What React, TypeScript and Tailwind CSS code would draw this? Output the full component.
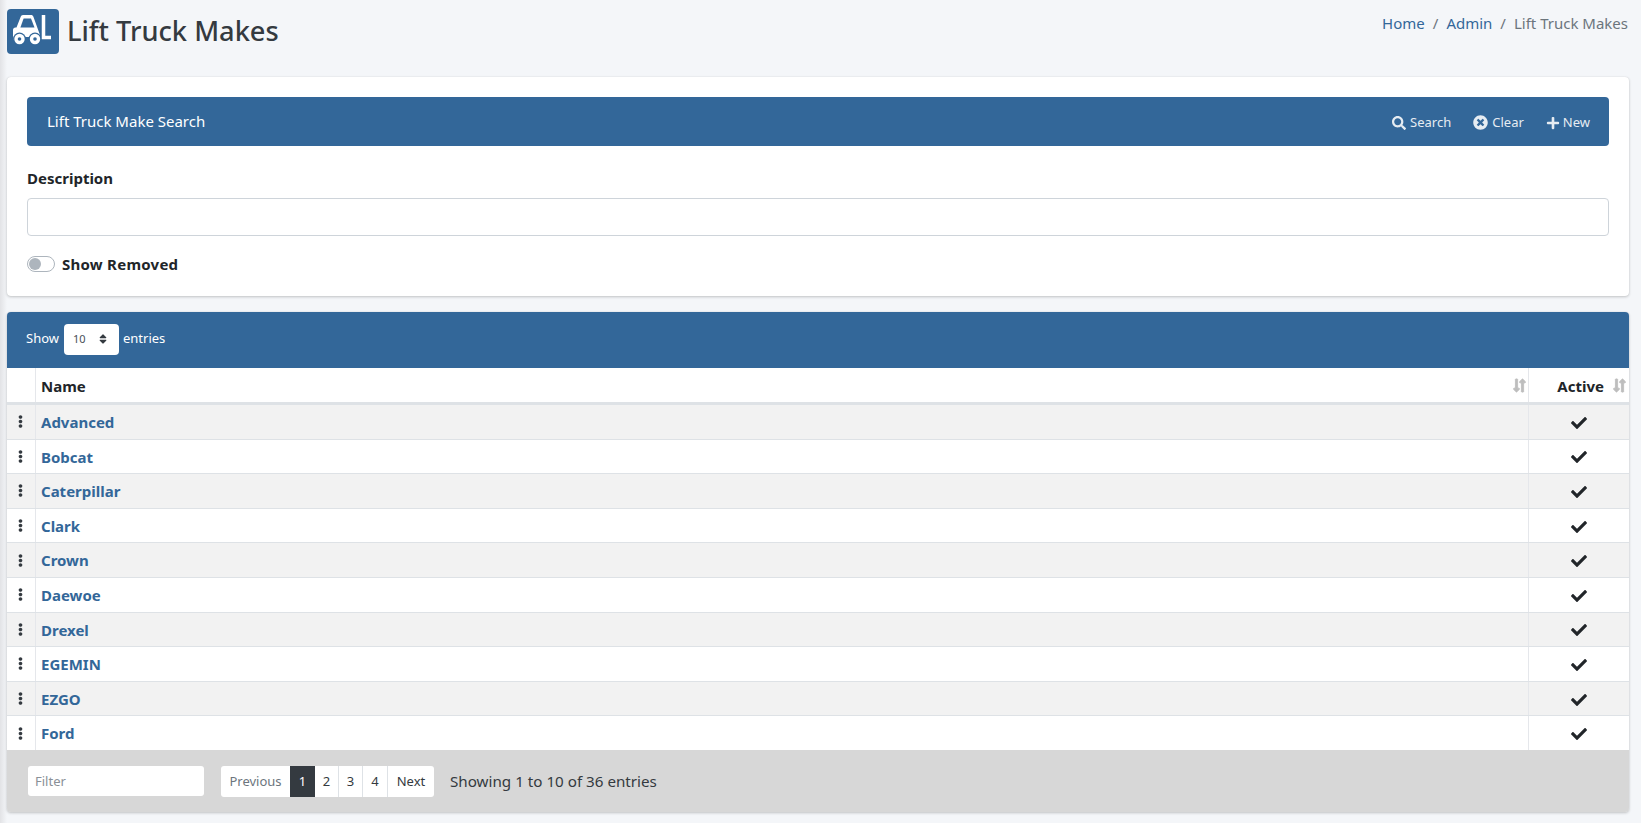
import { FaSearch, FaTimesCircle, FaPlus, FaCheck, FaEllipsisV, FaSort, FaLongArrowAltDown, FaLongArrowAltUp } from 'react-icons/fa'

const MAKES = ['Advanced', 'Bobcat', 'Caterpillar', 'Clark', 'Crown', 'Daewoe', 'Drexel', 'EGEMIN', 'EZGO', 'Ford']

function SortIcon() {
  return (
    <span className="flex text-[#bdbdbd]">
      <FaLongArrowAltDown className="w-[7px] h-[15px] stroke-[30px]" preserveAspectRatio="none" />
      <FaLongArrowAltUp className="w-[7px] h-[15px] -ml-[1px] stroke-[30px]" preserveAspectRatio="none" />
    </span>
  )
}

function ForkliftLogo() {
  return (
    <svg width="52" height="45" viewBox="0 0 52 45" className="shrink-0">
      <rect width="52" height="45" rx="4" fill="#336799" />
      <path d="M16 6h8c1.200 0 2 .6 2.400 1.700L33 26v5h-4l-3-3H16l-3 3H6V21c0-1.400 1-2.400 2.400-2.400h1.100L13.600 8c.4-1.200 1.200-2 2.400-2z" fill="#fff" />
      <path d="M16.600 9.500 13.400 18.600H27.500L24 9.500z" fill="#336799" />
      <circle cx="12.500" cy="30" r="6.500" fill="#336799" />
      <circle cx="12.500" cy="30" r="5.200" fill="#fff" />
      <circle cx="12.500" cy="30" r="1.800" fill="#336799" />
      <circle cx="28" cy="30" r="6.500" fill="#336799" />
      <circle cx="28" cy="30" r="5.200" fill="#fff" />
      <circle cx="28" cy="30" r="1.800" fill="#336799" />
      <path d="M36.500 6v22.500h7.500" stroke="#fff" strokeWidth="3.500" fill="none" />
    </svg>
  )
}

export default function App() {
  return (
    <div className="relative w-[1641px] h-[823px] overflow-hidden bg-[#f4f6f9] pl-[7px] pr-[12px] text-[#212529] font-['Noto_Sans',sans-serif]">
      {/* sidebar shadow */}
      <div className="absolute left-0 top-0 bottom-0 w-[7px] bg-gradient-to-r from-[#e2e3e6] to-[#f4f6f9]" />

      {/* Header */}
      <div className="relative flex justify-between h-[77px] pt-[9px]">
        <div className="flex items-start">
          <ForkliftLogo />
          <h1 className="ml-[8px] text-[27.200px] leading-[44px] font-medium text-[#343a40]">Lift Truck Makes</h1>
        </div>
        <div className="flex text-[15px] leading-[24px] pt-[2px] pr-[1px] text-[#6c757d]">
          <span className="text-[#336799]">Home</span>
          <span className="px-2">/</span>
          <span className="text-[#336799]">Admin</span>
          <span className="px-2">/</span>
          <span>Lift Truck Makes</span>
        </div>
      </div>

      {/* Search card */}
      <div className="relative h-[219px] rounded-[4px] bg-white px-5 pt-5 shadow-[0_0_1px_rgba(0,0,0,.125),0_1px_3px_rgba(0,0,0,.2)]">
        <div className="flex items-center justify-between h-[49px] rounded-[4px] bg-[#336799] pl-5 pr-[19px] text-white">
          <span className="text-[15px]">Lift Truck Make Search</span>
          <div className="flex items-center gap-[22px] text-[13px] text-[#e6ecf2] pt-[2px]">
            <span className="flex items-center gap-[4px]"><FaSearch className="text-[14px]" />Search</span>
            <span className="flex items-center gap-[4px]"><FaTimesCircle className="text-[15px]" />Clear</span>
            <span className="flex items-center gap-[3px]"><FaPlus className="text-[14px]" />New</span>
          </div>
        </div>
        <label className="block mt-[20px] text-[15px] leading-[24px] font-bold">Description</label>
        <input className="block mt-[8px] w-full h-[38px] rounded-[4px] border border-[#ced4da] bg-white" />
        <div className="flex items-center mt-[19px] h-[18px]">
          <span className="flex items-center w-[28px] h-[16px] rounded-full border border-[#adb5bd] bg-white pl-[1px]">
            <span className="w-[12px] h-[12px] rounded-full bg-[#adb5bd]" />
          </span>
          <span className="ml-[7px] text-[15px] font-bold tracking-[0.25px]">Show Removed</span>
        </div>
      </div>

      {/* Table card */}
      <div className="relative mt-[16px] rounded-[4px] overflow-hidden shadow-[0_0_1px_rgba(0,0,0,.125),0_1px_3px_rgba(0,0,0,.2)]">
        <div className="flex items-center h-[56px] bg-[#336799] pl-[19px] pb-[2px] text-[13px] text-white">
          <span>Show</span>
          <span className="flex items-center justify-between ml-[5px] mr-[4px] w-[55px] h-[31px] rounded-[4px] bg-white pl-[9px] pr-[10px] text-[11px] text-[#495057]">
            10
            <FaSort className="text-[12px] text-[#343a40]" />
          </span>
          <span>entries</span>
        </div>

        <div className="flex h-[37px] bg-white border-b-[3px] border-[#dee2e6] text-[15px] font-bold">
          <div className="w-[29px] border-r border-[#e5e7eb]" />
          <div className="flex-1 flex items-center justify-between pl-[5px] pr-[2px]">
            <span className="pt-[2px]">Name</span>
            <SortIcon />
          </div>
          <div className="flex items-center justify-end w-[101px] border-l border-[#e5e7eb] pr-[3px]">
            <span className="mr-[9px] pt-[2px]">Active</span>
            <SortIcon />
          </div>
        </div>

        {MAKES.map((name, i) => (
          <div key={name} className={`flex ${i === 9 ? 'h-[33.4px]' : 'h-[34.6px] border-b border-[#dee2e6]'} ${i % 2 === 0 ? 'bg-[#f2f2f2]' : 'bg-white'}`}>
            <div className="flex items-center justify-center w-[29px] pr-[2px] border-r border-[#e5e7eb] text-[13px] text-[#343a40]">
              <FaEllipsisV />
            </div>
            <div className="flex-1 flex items-center pl-[5px] pt-[1px] text-[15px] font-bold text-[#336799]">{name}</div>
            <div className="flex items-center justify-center w-[101px] pt-[2px] border-l border-[#e5e7eb] text-[16px] text-[#212529]">
              <FaCheck />
            </div>
          </div>
        ))}

        <div className="flex items-center h-[62px] bg-[#d7d7d7] pl-[21px]">
          <input placeholder="Filter" className="w-[176px] h-[30px] mt-[1px] rounded-[3px] bg-white px-[7px] text-[13px] placeholder:text-[#8a9097]" />
          <div className="flex ml-[17px] h-[31px] mt-[1px] rounded-[3px] overflow-hidden bg-white text-[13px] leading-[31px] text-center">
            <span className="w-[69px] text-[#6c757d]">Previous</span>
            <span className="w-[25px] bg-[#343a40] text-white">1</span>
            <span className="w-[24px] border-r border-[#dee2e6] text-[#343a40]">2</span>
            <span className="w-[24px] border-r border-[#dee2e6] text-[#343a40]">3</span>
            <span className="w-[25px] border-r border-[#dee2e6] text-[#343a40]">4</span>
            <span className="w-[46px] text-[#343a40]">Next</span>
          </div>
          <span className="ml-[16px] pt-[2px] text-[15.200px] text-[#343a40]">Showing 1 to 10 of 36 entries</span>
        </div>
      </div>
    </div>
  )
}
